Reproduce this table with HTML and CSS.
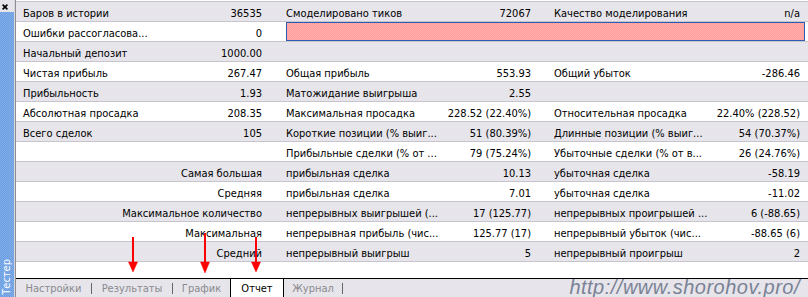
FILE: index.html
```html
<!DOCTYPE html>
<html lang="ru">
<head>
<meta charset="utf-8">
<title>Тестер — Отчет</title>
<link rel="stylesheet" href="styles.css">
</head>
<body>
<div class="app">
  <aside class="side">
    <div class="side-top">
      <svg class="close" width="6" height="6" viewBox="0 0 6 6"><path d="M0.6 0.6L5.4 5.4M5.4 0.6L0.6 5.4" stroke="#000" stroke-width="1.6"/></svg>
    </div>
    <div class="side-bar"><span class="side-title">Тестер</span></div>
  </aside>
  <main class="main">
    <div class="report">
      <div class="row alt">
        <div class="c k1">Баров в истории</div><div class="c v1">36535</div>
        <div class="c k2">Смоделировано тиков</div><div class="c v2">72067</div>
        <div class="c k3">Качество моделирования</div><div class="c v3">n/a</div>
      </div>
      <div class="row">
        <div class="c k1">Ошибки рассогласова...</div><div class="c v1">0</div>
        <div class="barcell"><div class="bar"></div></div>
      </div>
      <div class="row alt">
        <div class="c k1">Начальный депозит</div><div class="c v1">1000.00</div>
      </div>
      <div class="row">
        <div class="c k1">Чистая прибыль</div><div class="c v1">267.47</div>
        <div class="c k2">Общая прибыль</div><div class="c v2">553.93</div>
        <div class="c k3">Общий убыток</div><div class="c v3">-286.46</div>
      </div>
      <div class="row alt">
        <div class="c k1">Прибыльность</div><div class="c v1">1.93</div>
        <div class="c k2">Матожидание выигрыша</div><div class="c v2">2.55</div>
      </div>
      <div class="row">
        <div class="c k1">Абсолютная просадка</div><div class="c v1">208.35</div>
        <div class="c k2">Максимальная просадка</div><div class="c v2">228.52 (22.40%)</div>
        <div class="c k3">Относительная просадка</div><div class="c v3">22.40% (228.52)</div>
      </div>
      <div class="row alt">
        <div class="c k1">Всего сделок</div><div class="c v1">105</div>
        <div class="c k2">Короткие позиции (% выиг...</div><div class="c v2">51 (80.39%)</div>
        <div class="c k3">Длинные позиции (% выиг...</div><div class="c v3">54 (70.37%)</div>
      </div>
      <div class="row">
        <div class="c k2 from3">Прибыльные сделки (% от ...</div><div class="c v2">79 (75.24%)</div>
        <div class="c k3">Убыточные сделки (% от в...</div><div class="c v3">26 (24.76%)</div>
      </div>
      <div class="row alt">
        <div class="c span-l">Самая большая</div>
        <div class="c k2">прибыльная сделка</div><div class="c v2">10.13</div>
        <div class="c k3">убыточная сделка</div><div class="c v3">-58.19</div>
      </div>
      <div class="row">
        <div class="c span-l">Средняя</div>
        <div class="c k2">прибыльная сделка</div><div class="c v2">7.01</div>
        <div class="c k3">убыточная сделка</div><div class="c v3">-11.02</div>
      </div>
      <div class="row alt">
        <div class="c span-l">Максимальное количество</div>
        <div class="c k2">непрерывных выигрышей (...</div><div class="c v2">17 (125.77)</div>
        <div class="c k3">непрерывных проигрышей ...</div><div class="c v3">6 (-88.65)</div>
      </div>
      <div class="row">
        <div class="c span-l">Максимальная</div>
        <div class="c k2">непрерывная прибыль (чис...</div><div class="c v2">125.77 (17)</div>
        <div class="c k3">непрерывный убыток (чис...</div><div class="c v3">-88.65 (6)</div>
      </div>
      <div class="row alt">
        <div class="c span-l">Средний</div>
        <div class="c k2">непрерывный выигрыш</div><div class="c v2">5</div>
        <div class="c k3">непрерывный проигрыш</div><div class="c v3">2</div>
      </div>
    </div>
    <div class="spacer"></div>
    <nav class="tabs">
      <div class="tab t1">Настройки</div><div class="sep"></div>
      <div class="tab t2">Результаты</div><div class="sep"></div>
      <div class="tab t3">График</div>
      <div class="tab active">Отчет</div>
      <div class="tab t5">Журнал</div><div class="sep"></div>
    </nav>
  </main>
  <svg class="arrows" width="808" height="297" viewBox="0 0 808 297">
    <g fill="#ff0000" stroke="#ff0000">
      <line x1="133" y1="237" x2="133" y2="264" stroke-width="2"/>
      <polygon points="128.5,262 137.5,262 133,272" stroke-width="0.5"/>
      <line x1="205" y1="233" x2="205" y2="264" stroke-width="2"/>
      <polygon points="200.5,262 209.5,262 205,273" stroke-width="0.5"/>
      <line x1="256" y1="237" x2="256" y2="264" stroke-width="2"/>
      <polygon points="251.5,262 260.5,262 256,272" stroke-width="0.5"/>
    </g>
  </svg>
  <div class="watermark">http://www.shorohov.pro/</div>
</div>
</body>
</html>
```

FILE: styles.css
```css
html, body {
  margin: 0;
  padding: 0;
  background: #ffffff;
}

body {
  font-family: "DejaVu Sans Condensed", "DejaVu Sans", sans-serif;
  font-size: 11px;
  color: #000;
}

.app {
  position: relative;
  width: 808px;
  height: 297px;
  display: flex;
  overflow: hidden;
}

/* left docked panel caption */
.side {
  width: 14px;
  border-right: 1px solid #d8d8dc;
  display: flex;
  flex-direction: column;
}

.side-top {
  height: 12px;
  background: repeating-conic-gradient(#ebe7eb 0 25%, #e1e2ea 0 50%) 0 0 / 2px 2px;
}

.close {
  display: block;
  margin: 4px 0 0 2px;
}

.side-bar {
  flex: 1;
  background: repeating-conic-gradient(#6a9de0 0 25%, #82aeea 0 50%) 0 0 / 2px 2px;
  display: flex;
  flex-direction: column;
  justify-content: flex-end;
  align-items: center;
}

.side-title {
  writing-mode: vertical-rl;
  transform: rotate(180deg);
  color: #ffffff;
  font-size: 11px;
  line-height: 14px;
  margin-bottom: 2px;
}

/* main report area */
.main {
  flex: 1;
  border-left: 1px solid #8e8e94;
  display: flex;
  flex-direction: column;
  min-width: 0;
}

.report {
  margin-top: 1px;
  border-top: 1px solid #c6c4cc;
}

.row {
  display: grid;
  grid-template-columns: 134px 120px 170px 99px 168px 101px;
  height: 19px;
  border-bottom: 1px solid #c6c4cc;
  background: #ffffff;
}

.row.alt {
  background: repeating-conic-gradient(#ebe7eb 0 25%, #e1e2ea 0 50%) 0 0 / 2px 2px;
}

.c {
  white-space: nowrap;
  overflow: hidden;
  padding-top: 4px;
  line-height: 15px;
}

.k1 { padding-left: 7px; }
.v1 { text-align: right; padding-right: 8px; }
.k2 { padding-left: 16px; }
.v2 { text-align: right; padding-right: 8px; }
.k3 { padding-left: 15px; }
.v3 { text-align: right; padding-right: 8px; }

.from3 { grid-column-start: 3; }

.span-l {
  grid-column: 1 / 3;
  text-align: right;
  padding-right: 8px;
}

.barcell {
  grid-column: 3 / 7;
  padding: 0 3px 0 16px;
}

.bar {
  height: 19px;
  box-sizing: border-box;
  border: 1px solid #2f5cb0;
  background: repeating-conic-gradient(#ff9c9c 0 25%, #ffb0ac 0 50%) 0 0 / 2px 2px;
}

.spacer {
  flex: 1;
  background: #ffffff;
}

/* bottom tabs */
.tabs {
  height: 18px;
  border-top: 1px solid #000;
  background: repeating-conic-gradient(#ebe7eb 0 25%, #e1e2ea 0 50%) 0 0 / 2px 2px;
  display: flex;
  align-items: flex-start;
}

.tab {
  height: 18px;
  box-sizing: border-box;
  padding-top: 2px;
  line-height: 16px;
  text-align: center;
  color: #8a8a8e;
  white-space: nowrap;
}

.t1 { width: 75px; }
.t2 { width: 80px; }
.t3 { width: 57px; }
.t5 { width: 58px; }

.tab.active {
  width: 54px;
  background: #ffffff;
  border-left: 1px solid #000;
  border-right: 1px solid #000;
  color: #000;
}

.sep {
  width: 1px;
  height: 11px;
  margin-top: 4px;
  background: #666;
}

/* overlays */
.arrows {
  position: absolute;
  left: 0;
  top: 0;
  pointer-events: none;
}

.watermark {
  position: absolute;
  top: 277px;
  right: 8px;
  font-family: "Liberation Sans", Arial, sans-serif;
  font-style: italic;
  font-size: 20px;
  line-height: 20px;
  letter-spacing: 0.5px;
  color: #7a8295;
  white-space: nowrap;
}
```
